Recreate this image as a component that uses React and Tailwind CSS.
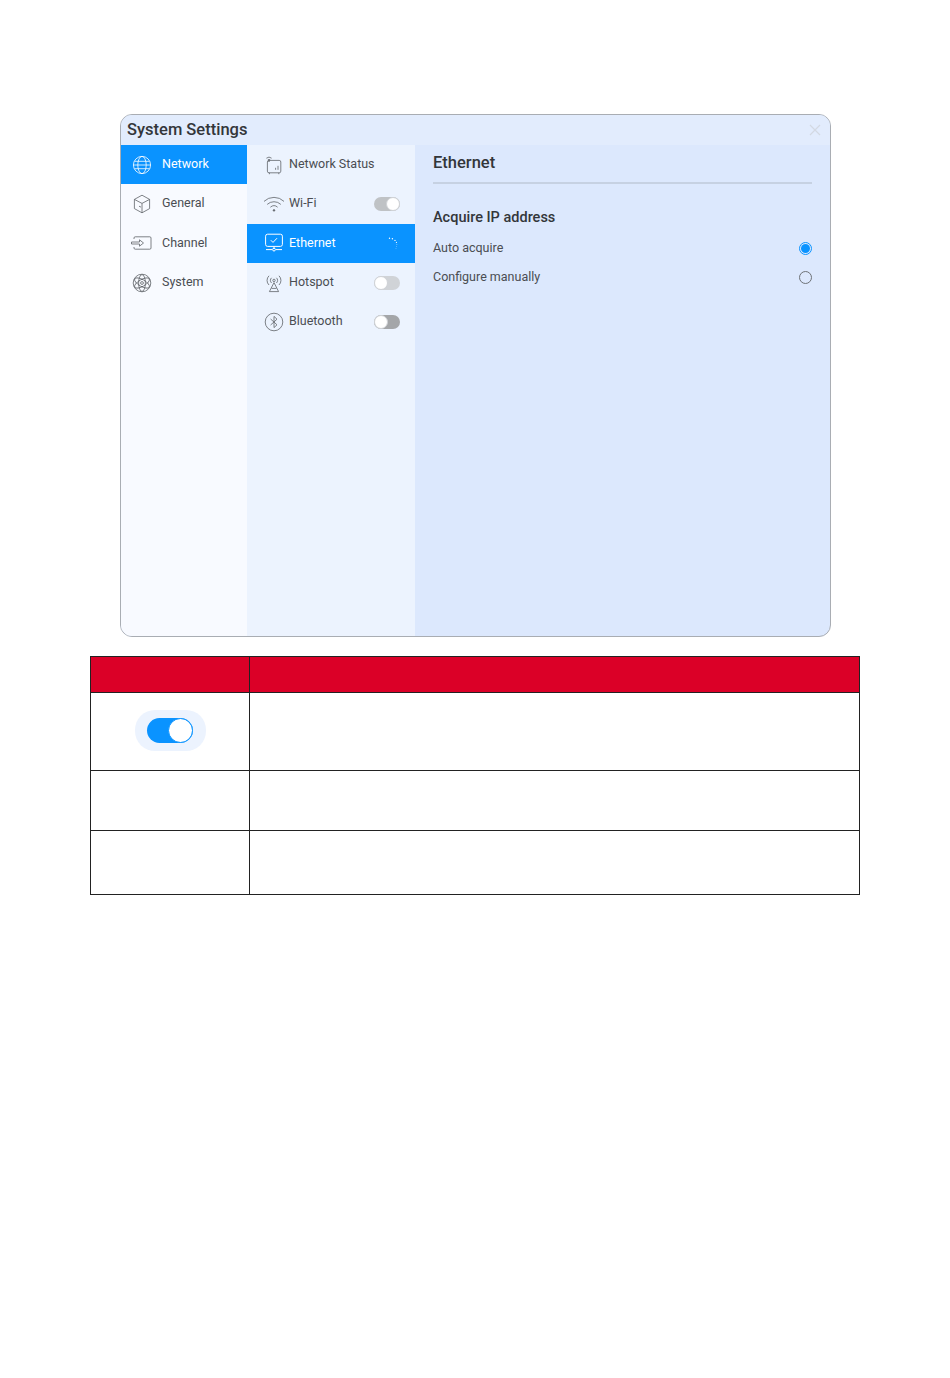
import React from "react";

const S = { fill: "none", stroke: "currentColor", strokeWidth: 0.8 };

const Globe = () => (
  <svg width="20" height="20" viewBox="0 0 20 20" {...S}>
    <circle cx="10" cy="10" r="8.6" />
    <ellipse cx="10" cy="10" rx="4.2" ry="8.6" />
    <path d="M2.4 6.3h15.2M1.4 10h17.2M2.4 13.7h15.2" />
  </svg>
);
const Cube = () => (
  <svg width="20" height="20" viewBox="0 0 20 20" {...S}>
    <path d="M10 1.2l7.6 4.2v9.2L10 18.8l-7.6-4.2V5.4z" />
    <path d="M2.4 5.4L10 9.4l7.6-4M10 9.4v9.4M7 12.2l2 .9" />
  </svg>
);
const Channel = () => (
  <svg width="21" height="14" viewBox="0 0 21 14" {...S}>
    <path d="M3 3V2a1.2 1.2 0 0 1 1.2-1.2h14.6A1.2 1.2 0 0 1 20 2v10a1.2 1.2 0 0 1-1.2 1.2H4.2A1.2 1.2 0 0 1 3 12v-1" />
    <path d="M.5 6h8V3.8L12.5 7l-4 3.2V8h-8z" />
  </svg>
);
const Atom = () => (
  <svg width="20" height="20" viewBox="0 0 20 20" {...S}>
    <circle cx="10" cy="10" r="8.8" />
    <ellipse cx="10" cy="10" rx="3.4" ry="8.4" />
    <ellipse cx="10" cy="10" rx="3.4" ry="8.4" transform="rotate(60 10 10)" />
    <ellipse cx="10" cy="10" rx="3.4" ry="8.4" transform="rotate(120 10 10)" />
    <circle cx="10" cy="10" r="1.4" />
  </svg>
);
const Status = () => (
  <svg width="18" height="20" viewBox="0 0 18 20" {...S}>
    <rect x="2.4" y="5.4" width="13.4" height="12.4" rx="1.6" />
    <path d="M4.4 17.8v1.4M13.8 17.8v1.4M10.6 14.8v-2M13 14.8v-4" />
    <path d="M1.4 3.2a4 4 0 0 1 5.2 0M2.8 4.8a2 2 0 0 1 2.4 0" />
    <circle cx="4" cy="6" r=".6" />
  </svg>
);
const Wifi = () => (
  <svg width="22" height="16" viewBox="0 0 22 16" {...S}>
    <path d="M1 5.4a14.4 14.4 0 0 1 20 0M4.2 8.4a10 10 0 0 1 13.6 0M7.4 11.2a5.4 5.4 0 0 1 7.2 0" />
    <circle cx="11" cy="14.4" r=".8" fill="currentColor" />
  </svg>
);
const Monitor = () => (
  <svg width="20" height="20" viewBox="0 0 20 20" {...S} strokeWidth="1">
    <rect x="1.6" y="1.2" width="16.8" height="12.2" rx="2" />
    <path d="M6.8 7.2l2.2 2.2 4-4.2M10 13.4v2.6M2 16.6h6M12 16.6h6" />
    <circle cx="10" cy="16.6" r="1.4" />
  </svg>
);
const Hotspot = () => (
  <svg width="20" height="20" viewBox="0 0 20 20" {...S}>
    <circle cx="10" cy="7.4" r="1.2" />
    <path d="M7.6 10a3.4 3.4 0 0 1 0-5.2M12.4 4.8a3.4 3.4 0 0 1 0 5.2M5 12a6.4 6.4 0 0 1 0-9.2M15 2.8a6.4 6.4 0 0 1 0 9.2" />
    <path d="M10 9.6l4.6 9H5.4zM7.6 15.4h4.8" />
  </svg>
);
const Bt = () => (
  <svg width="20" height="20" viewBox="0 0 20 20" {...S}>
    <circle cx="10" cy="10" r="8.8" />
    <path d="M6.6 7l6.4 5.8L10 15.6V4.4l3 2.8L6.6 13" />
  </svg>
);
const Spinner = () => (
  <svg width="12" height="13" viewBox="0 0 12 13" fill="#fff">
    <circle cx="1.5" cy="1.2" r=".7" />
    <circle cx="4.4" cy="1.8" r=".7" />
    <circle cx="7" cy="3.4" r=".65" />
    <circle cx="8.4" cy="5.4" r=".55" />
    <circle cx="8.9" cy="7.6" r=".45" />
    <circle cx="8.7" cy="9.6" r=".35" />
    <circle cx="8" cy="11.6" r=".3" />
  </svg>
);

const Toggle = ({ track }) => (
  <span className={`relative block h-[14px] w-[26px] rounded-full ${track}`}>
    <span className="absolute right-[13px] top-0 hidden" />
  </span>
);

const Switch = ({ track, knobRight }) => (
  <span className={`flex h-[14px] w-[26px] rounded-full ${track} ${knobRight ? "justify-end" : "justify-start"}`}>
    <span className="h-[14px] w-[14px] rounded-full border border-[#cfd2d6] bg-white" />
  </span>
);

const NavRow = ({ icon, label, active, h }) => (
  <div className={`flex ${h} items-center ${active ? "bg-[#0a93ff] text-white" : "text-[#4a4d52]"}`}>
    <span className={`flex w-[41px] justify-center ${active ? "text-white" : "text-[#5f6368]"}`}>{icon}</span>
    <span className="text-[12.5px]">{label}</span>
  </div>
);

const SubRow = ({ icon, label, active, right, h }) => (
  <div className={`flex ${h} items-center pr-[15px] ${active ? "bg-[#0a93ff] text-white" : "text-[#4a4d52]"}`}>
    <span className={`flex w-[42px] justify-center pl-[11px] ${active ? "text-white" : "text-[#5f6368]"}`}>{icon}</span>
    <span className="flex-1 text-[12.5px]">{label}</span>
    {right}
  </div>
);

export default function App() {
  return (
    <div className="h-[1378px] w-[950px] bg-white pt-[114px] [font-family:Roboto,sans-serif]">
      <div className="ml-[120px] flex h-[523px] w-[711px] flex-col overflow-hidden rounded-[12px] border border-[#a9adb3] bg-[#dce8fd]">
        <div className="flex h-[30px] shrink-0 items-center justify-between bg-[#e2ecfd] pl-[6px] pr-[9px]">
          <span className="text-[16.5px] font-medium text-[#33363a]">System Settings</span>
          <svg width="12" height="12" viewBox="0 0 12 12" fill="none" stroke="#d3d9e2" strokeWidth="1.2">
            <path d="M1 1l10 10M11 1L1 11" />
          </svg>
        </div>
        <div className="flex min-h-0 flex-1">
          <div className="w-[126px] shrink-0 bg-[#f8faff]">
            <NavRow icon={<Globe />} label="Network" active h="h-[39px]" />
            <NavRow icon={<Cube />} label="General" h="h-[39.5px]" />
            <NavRow icon={<Channel />} label="Channel" h="h-[39.5px]" />
            <NavRow icon={<Atom />} label="System" h="h-[39px]" />
          </div>
          <div className="w-[168px] shrink-0 bg-[#ecf3fe]">
            <SubRow icon={<Status />} label="Network Status" h="h-[39px]" />
            <SubRow icon={<Wifi />} label="Wi-Fi" h="h-[39.5px]" right={<Switch track="bg-[#bfc2c5]" knobRight />} />
            <SubRow icon={<Monitor />} label="Ethernet" active h="h-[39.5px]" right={<Spinner />} />
            <SubRow icon={<Hotspot />} label="Hotspot" h="h-[39px]" right={<Switch track="bg-[#d0d3d7]" />} />
            <SubRow icon={<Bt />} label="Bluetooth" h="h-[39.5px]" right={<Switch track="bg-[#a4a6a9]" />} />
          </div>
          <div className="flex-1 px-[18px]">
            <div className="flex h-[39px] items-center border-b-2 border-[#c6d1e2] text-[16.5px] font-medium text-[#33363a]">
              Ethernet
            </div>
            <div className="mt-[24px] text-[14.5px] font-medium leading-[20px] text-[#33363a]">Acquire IP address</div>
            <div className="mt-[6px] flex h-[29px] items-center justify-between text-[12.5px] text-[#4a4d52]">
              <span>Auto acquire</span>
              <span className="flex h-[13px] w-[13px] items-center justify-center rounded-full border border-[#0a93ff]">
                <span className="h-[9px] w-[9px] rounded-full bg-[#0a93ff]" />
              </span>
            </div>
            <div className="flex h-[29px] items-center justify-between text-[12.5px] text-[#4a4d52]">
              <span>Configure manually</span>
              <span className="h-[13px] w-[13px] rounded-full border border-[#6e7277]" />
            </div>
          </div>
        </div>
      </div>

      <div className="ml-[90px] mt-[19px] grid w-[770px] grid-cols-[159px_1fr] grid-rows-[36px_78px_60px_64px] border-b border-r border-[#222]">
        <div className="border-l border-t border-[#222] bg-[#db0027]" />
        <div className="border-l border-t border-[#222] bg-[#db0027]" />
        <div className="flex items-center justify-center border-l border-t border-[#222] pb-[2px]">
          <span className="flex h-[41px] w-[71px] items-center justify-center rounded-[20px] bg-[#ecf3fe]">
            <span className="flex h-[25px] w-[46px] justify-end rounded-full bg-[#0a93ff]">
              <span className="h-[25px] w-[25px] rounded-full border border-[#0a93ff] bg-white" />
            </span>
          </span>
        </div>
        <div className="border-l border-t border-[#222]" />
        <div className="border-l border-t border-[#222]" />
        <div className="border-l border-t border-[#222]" />
        <div className="border-l border-t border-[#222]" />
        <div className="border-l border-t border-[#222]" />
      </div>
    </div>
  );
}
